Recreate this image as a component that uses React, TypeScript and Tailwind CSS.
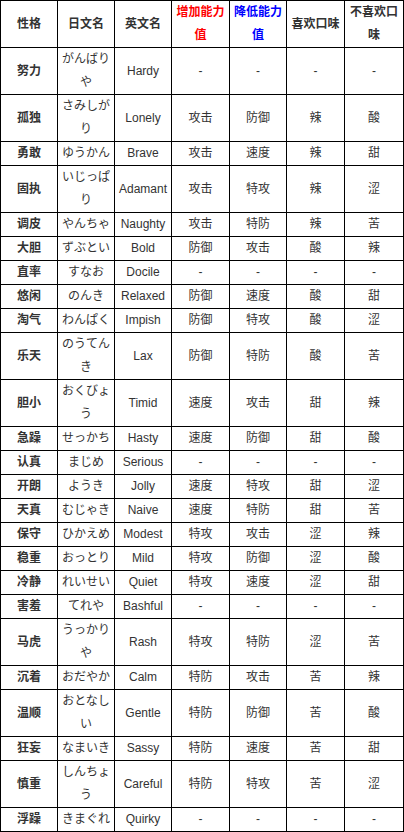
import React from "react";

const rows: [string, string, string, string, string, string, string][] = [
  ["努力", "がんばりや", "Hardy", "-", "-", "-", "-"],
  ["孤独", "さみしがり", "Lonely", "攻击", "防御", "辣", "酸"],
  ["勇敢", "ゆうかん", "Brave", "攻击", "速度", "辣", "甜"],
  ["固执", "いじっぱり", "Adamant", "攻击", "特攻", "辣", "涩"],
  ["调皮", "やんちゃ", "Naughty", "攻击", "特防", "辣", "苦"],
  ["大胆", "ずぶとい", "Bold", "防御", "攻击", "酸", "辣"],
  ["直率", "すなお", "Docile", "-", "-", "-", "-"],
  ["悠闲", "のんき", "Relaxed", "防御", "速度", "酸", "甜"],
  ["淘气", "わんぱく", "Impish", "防御", "特攻", "酸", "涩"],
  ["乐天", "のうてんき", "Lax", "防御", "特防", "酸", "苦"],
  ["胆小", "おくびょう", "Timid", "速度", "攻击", "甜", "辣"],
  ["急躁", "せっかち", "Hasty", "速度", "防御", "甜", "酸"],
  ["认真", "まじめ", "Serious", "-", "-", "-", "-"],
  ["开朗", "ようき", "Jolly", "速度", "特攻", "甜", "涩"],
  ["天真", "むじゃき", "Naive", "速度", "特防", "甜", "苦"],
  ["保守", "ひかえめ", "Modest", "特攻", "攻击", "涩", "辣"],
  ["稳重", "おっとり", "Mild", "特攻", "防御", "涩", "酸"],
  ["冷静", "れいせい", "Quiet", "特攻", "速度", "涩", "甜"],
  ["害羞", "てれや", "Bashful", "-", "-", "-", "-"],
  ["马虎", "うっかりや", "Rash", "特攻", "特防", "涩", "苦"],
  ["沉着", "おだやか", "Calm", "特防", "攻击", "苦", "辣"],
  ["温顺", "おとなしい", "Gentle", "特防", "防御", "苦", "酸"],
  ["狂妄", "なまいき", "Sassy", "特防", "速度", "苦", "甜"],
  ["慎重", "しんちょう", "Careful", "特防", "特攻", "苦", "涩"],
  ["浮躁", "きまぐれ", "Quirky", "-", "-", "-", "-"],
];

const cell =
  "border border-black px-[2px] py-0 text-center align-middle leading-[23px]";

export default function App() {
  return (
    <div
      className="bg-white text-[12px] text-[#333333]"
      style={{ fontFamily: '"Liberation Sans", "Noto Sans CJK SC", sans-serif' }}
    >
      <table className="w-[403px] table-fixed border-collapse">
        <colgroup>
          <col className="w-[57px]" />
          <col className="w-[57px]" />
          <col className="w-[57px]" />
          <col className="w-[58px]" />
          <col className="w-[57px]" />
          <col className="w-[58px]" />
          <col className="w-[59px]" />
        </colgroup>
        <thead>
          <tr className="font-bold">
            <th className={cell}>性格</th>
            <th className={cell}>日文名</th>
            <th className={cell}>英文名</th>
            <th className={`${cell} text-[#ff0000]`}>增加能力值</th>
            <th className={`${cell} text-[#0000ff]`}>降低能力值</th>
            <th className={cell}>喜欢口味</th>
            <th className={cell}>不喜欢口味</th>
          </tr>
        </thead>
        <tbody>
          {rows.map((r) => (
            <tr key={r[0]}>
              <td className={`${cell} font-bold`}>{r[0]}</td>
              <td className={cell}>{r[1]}</td>
              <td className={cell}>{r[2]}</td>
              <td className={cell}>{r[3]}</td>
              <td className={cell}>{r[4]}</td>
              <td className={cell}>{r[5]}</td>
              <td className={cell}>{r[6]}</td>
            </tr>
          ))}
        </tbody>
      </table>
    </div>
  );
}
